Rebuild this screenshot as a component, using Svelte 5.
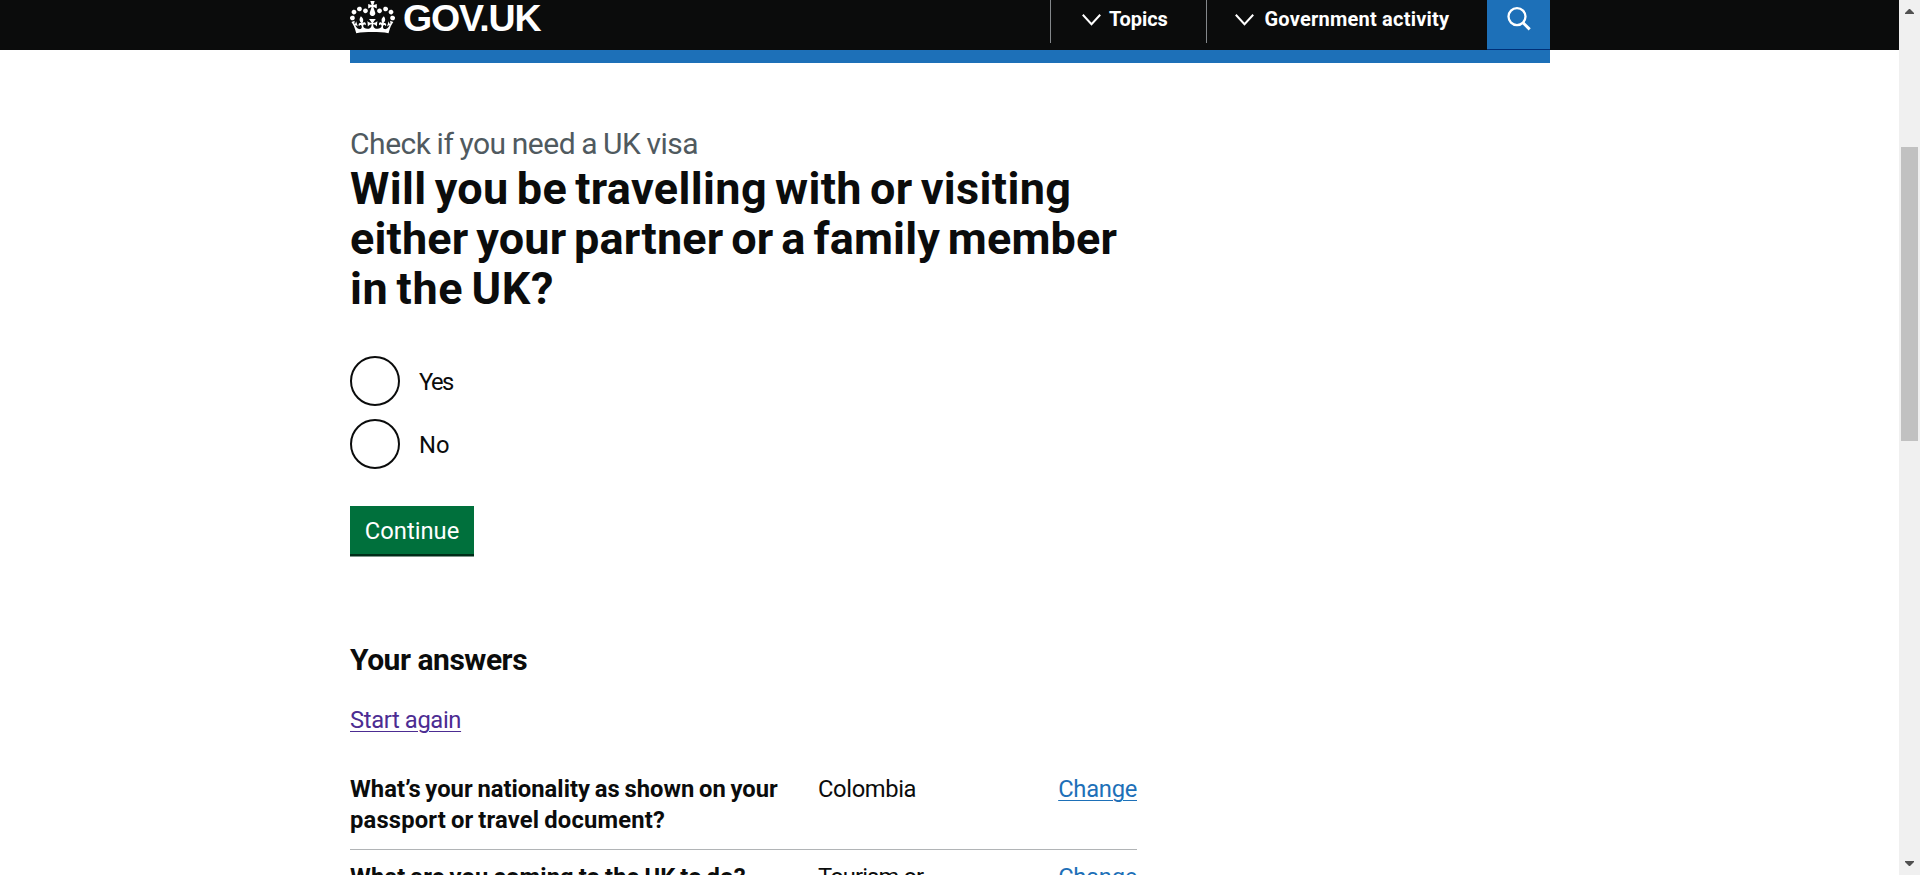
<script>
  let choice = $state('');

  const menus = [
    { label: 'Topics', cls: 'topics' },
    { label: 'Government activity', cls: 'activity' }
  ];
  const answers = [
    {
      question: [
        ['What’s your nationality as shown on your', 0.03],
        ['passport or travel document?', 0.19]
      ],
      value: ['Colombia', -0.38]
    },
    {
      question: [['What are you coming to the UK to do?', 0.15]],
      value: ['Tourism or', -0.88]
    }
  ];
  const title = [
    ['Will you be travelling with or visiting', 0.37],
    ['either your partner or a family member', 0.16],
    ['in the UK?', 0.6]
  ];
</script>

<div class="window">
  <div class="page">
    <header>
      <div class="container bar">
        <a class="logo" href="#home" aria-label="GOV.UK">
          <svg width="45" height="32.5" viewBox="0 0 132 97" preserveAspectRatio="none" aria-hidden="true">
            <path fill="#fff" d="M25 30.2c3.5 1.5 7.7-.2 9.1-3.7 1.5-3.6-.2-7.8-3.9-9.2-3.6-1.4-7.6.3-9.1 3.9-1.4 3.5.3 7.5 3.9 9zM9 39.5c3.6 1.5 7.8-.2 9.2-3.7 1.5-3.6-.2-7.8-3.9-9.1-3.6-1.5-7.6.2-9.1 3.8-1.4 3.5.3 7.5 3.8 9zM4.4 57.2c3.5 1.5 7.7-.2 9.1-3.8 1.5-3.6-.2-7.7-3.9-9.1-3.5-1.5-7.6.3-9.1 3.8-1.4 3.5.3 7.6 3.9 9.1zm38.3-21.4c3.5 1.5 7.7-.2 9.1-3.8 1.5-3.6-.2-7.7-3.9-9.1-3.6-1.5-7.6.3-9.1 3.8-1.3 3.6.4 7.7 3.9 9.1zm64.4-5.6c-3.6 1.5-7.8-.2-9.1-3.7-1.5-3.6.2-7.8 3.8-9.2 3.6-1.4 7.7.3 9.2 3.9 1.3 3.5-.4 7.5-3.9 9zm15.9 9.3c-3.6 1.5-7.7-.2-9.1-3.7-1.5-3.6.2-7.8 3.7-9.1 3.6-1.5 7.7.2 9.2 3.8 1.5 3.5-.3 7.5-3.8 9zm4.7 17.7c-3.6 1.5-7.8-.2-9.2-3.8-1.5-3.6.2-7.7 3.9-9.1 3.6-1.5 7.7.3 9.2 3.8 1.3 3.5-.4 7.6-3.9 9.1zM89.3 35.8c-3.6 1.5-7.8-.2-9.2-3.8-1.4-3.6.2-7.7 3.9-9.1 3.6-1.5 7.7.3 9.2 3.8 1.4 3.6-.3 7.7-3.9 9.1zM69.7 17.7l8.9 4.7V9.3l-8.9 2.8c-.2-.3-.5-.6-.9-.9L72.4 0H59.6l3.5 11.2c-.3.3-.6.5-.9.9l-8.8-2.8v13.1l8.8-4.7c.3.3.6.7.9.9l-5 15.4v.1c-.2.8-.4 1.6-.4 2.4 0 4.1 3.1 7.5 7 8.1h.2c.3 0 .7.1 1 .1.4 0 .7 0 1-.1h.2c4-.6 7.1-4.1 7.1-8.1 0-.8-.1-1.7-.4-2.4V34l-5.1-15.4c.4-.2.7-.6 1-.9zM66 92.8c16.9 0 32.8 1.1 47.1 3.2 4-16.9 8.9-26.7 14-33.5l-9.6-3.4c1 4.9 1.1 7.2 0 10.2-1.5-1.4-3-4.3-4.2-8.7L108.6 76c2.8-2 5-3.2 7.5-3.3-4.4 9.4-10 11.9-13.6 11.2-4.3-.8-6.3-4.6-5.6-7.9 1-4.7 5.7-5.9 8-.5 4.3-8.7-3-11.4-7.6-8.8 7.1-7.2 7.9-13.5 2.1-21.1-8 6.1-8.1 12.3-4.5 20.8-4.7-5.4-12.1-2.5-9.5 6.2 3.4-5.2 7.9-2 7.2 3.1-.6 4.3-6.4 7.8-13.5 7.2-10.3-.9-10.9-8-11.2-13.8 2.5-.5 7.1 1.8 11 7.3L80.2 60c-4.1 4.4-8 5.3-12.3 5.4 1.4-4.4 8-11.6 8-11.6H55.5s6.4 7.2 7.9 11.6c-4.2-.1-8-1-12.3-5.4l1.4 16.4c3.9-5.5 8.5-7.7 10.9-7.3-.3 5.8-.9 12.8-11.1 13.8-7.2.6-12.9-2.9-13.5-7.2-.7-5 3.8-8.3 7.1-3.1 2.7-8.7-4.6-11.6-9.4-6.2 3.7-8.5 3.6-14.7-4.6-20.8-5.8 7.6-5 13.9 2.2 21.1-4.7-2.6-11.9.1-7.7 8.8 2.3-5.5 7.1-4.2 8.1.5.7 3.3-1.3 7.1-5.7 7.9-3.5.7-9-1.8-13.5-11.2 2.5.1 4.7 1.3 7.5 3.3l-4.7-15.4c-1.2 4.4-2.7 7.2-4.3 8.7-1.1-3-.9-5.3 0-10.2l-9.5 3.4c5 6.9 9.9 16.7 14 33.5 14.8-2.1 30.8-3.2 47.7-3.2z" />
          </svg>
          <span>GOV.UK</span>
        </a>
        <nav>
          {#each menus as menu}
            <button class="menu {menu.cls}">
              <svg width="20" height="14" viewBox="0 0 20 14" aria-hidden="true">
                <path d="M.8 1.7 9.5 11.2l8.7-9.5" fill="none" stroke="#fff" stroke-width="2" />
              </svg>
              <span>{menu.label}</span>
            </button>
          {/each}
          <button class="search" aria-label="Search">
            <svg width="26" height="26" viewBox="0 0 26 26" aria-hidden="true">
              <circle cx="11" cy="10.6" r="8.5" fill="none" stroke="#fff" stroke-width="2.3" />
              <path d="m16.5 16.2 7.2 7.2" stroke="#fff" stroke-width="2.9" />
            </svg>
          </button>
        </nav>
      </div>
    </header>
    <div class="container stripe"></div>

    <main class="container">
      <form onsubmit={(e) => e.preventDefault()}>
        <span class="caption">Check if you need a UK visa</span>
        <h1>
          {#each title as [text, spacing]}
            <span style="letter-spacing: {spacing}px">{text}</span>
          {/each}
        </h1>
        <div class="radios">
          {#each ['Yes', 'No'] as option}
            <label class={option.toLowerCase()}>
              <input type="radio" name="response" value={option} bind:group={choice} />
              <span>{option}</span>
            </label>
          {/each}
        </div>
        <button class="continue">Continue</button>
      </form>

      <h2>Your answers</h2>
      <a class="restart" href="#start">Start again</a>

      <dl>
        {#each answers as row}
          <div class="row">
            <dt>
              {#each row.question as [text, spacing]}
                <span style="letter-spacing: {spacing}px">{text}</span>
              {/each}
            </dt>
            <dd style="letter-spacing: {row.value[1]}px">{row.value[0]}</dd>
            <dd><a class="change" href="#change">Change</a></dd>
          </div>
        {/each}
      </dl>
    </main>
  </div>

  <div class="scrollbar">
    <svg class="up" width="9" height="5" viewBox="0 0 9 5" aria-hidden="true"><path d="M0 5V4L4 0h1l4 4v1z" fill="#505050" /></svg>
    <div class="thumb"></div>
    <svg class="down" width="9" height="5" viewBox="0 0 9 5" aria-hidden="true"><path d="M0 0v1l4 4h1l4-4V0z" fill="#505050" /></svg>
  </div>
</div>

<style>
  :global(body) {
    margin: 0;
    overflow: hidden;
  }
  .window {
    display: flex;
    height: 875px;
    overflow: hidden;
    background: #fff;
    color: #0b0c0c;
    font: 400 23.75px/31.25px Roboto, 'Liberation Sans', sans-serif;
  }
  .page {
    flex: 1;
    height: 875px;
    overflow: hidden;
  }
  .container {
    width: 1200px;
    margin-left: 350px;
  }
  button {
    margin: 0;
    padding: 0;
    border: 0;
    border-radius: 0;
    background: none;
    font: inherit;
  }
  svg {
    display: block;
    flex: none;
  }
  header {
    height: 50px;
    background: #0b0c0c;
  }
  .bar {
    display: flex;
    justify-content: space-between;
    height: 50px;
  }
  .logo {
    display: flex;
    gap: 8px;
    padding-top: 1px;
    color: #fff;
    text-decoration: none;
    font: 700 37.5px/35px 'Liberation Sans', Arial, sans-serif;
    letter-spacing: -1.18px;
  }
  nav {
    display: flex;
    align-items: flex-start;
  }
  .menu {
    display: flex;
    box-sizing: border-box;
    height: 43px;
    padding: 3px 0 0 31px;
    border-left: 1px solid #84888b;
    color: #fff;
    font-size: 20px;
    font-weight: 700;
    line-height: 32px;
    gap: 7px;
  }
  .menu svg {
    margin-top: 10px;
  }
  .topics {
    width: 156px;
    letter-spacing: -0.09px;
  }
  .activity {
    width: 281px;
    padding-left: 28px;
    gap: 9.5px;
    letter-spacing: 0.22px;
  }
  .search {
    display: flex;
    align-items: flex-start;
    box-sizing: border-box;
    width: 63px;
    height: 50px;
    padding: 6px 0 0 19px;
    border-bottom: 1px solid #003078;
    background: #1d70b8;
  }
  .stripe {
    height: 12.5px;
    background: #1d70b8;
  }
  .caption {
    display: block;
    margin-top: 62px;
    color: #505a5f;
    font-size: 30px;
    line-height: 37.5px;
    letter-spacing: -0.45px;
    word-spacing: -1px;
  }
  h1 {
    margin: 2px 0 42px;
    font-size: 45px;
    line-height: 50px;
    font-weight: 700;
    word-spacing: -3.5px;
  }
  h1 span,
  dt span {
    display: block;
    white-space: nowrap;
  }
  .radios {
    display: flex;
    flex-direction: column;
    gap: 13px;
  }
  label {
    display: flex;
    align-items: center;
    gap: 19px;
    height: 50px;
  }
  label span {
    padding-top: 3px;
  }
  .yes {
    letter-spacing: -1.6px;
  }
  input {
    appearance: none;
    box-sizing: border-box;
    width: 50px;
    height: 50px;
    margin: 0;
    border: 2px solid #0b0c0c;
    border-radius: 50%;
  }
  input:checked {
    background: radial-gradient(#0b0c0c 12px, transparent 13px);
  }
  .continue {
    display: block;
    width: 124px;
    height: 48px;
    margin-top: 37px;
    background: #00703c;
    box-shadow: 0 2.5px 0 #002d18;
    color: #fff;
    line-height: 50px;
  }
  h2 {
    margin: 87px 0 0;
    font-size: 30px;
    line-height: 37.5px;
    font-weight: 700;
    letter-spacing: -0.47px;
  }
  a {
    text-decoration-thickness: 1px;
    text-underline-offset: 3px;
  }
  .restart {
    display: block;
    width: max-content;
    margin-top: 26px;
    color: #4c2c92;
    letter-spacing: -0.37px;
  }
  dl {
    width: 787px;
    margin: 37.75px 0 0;
  }
  .row {
    display: grid;
    grid-template-columns: 468px minmax(0, 1fr) auto;
    padding-bottom: 12.5px;
    margin-bottom: 12.25px;
    border-bottom: 1px solid #b1b4b6;
  }
  dt {
    font-weight: 700;
    word-spacing: -1.2px;
  }
  dd {
    margin: 0;
  }
  .change {
    color: #1d70b8;
    letter-spacing: -0.28px;
  }
  .scrollbar {
    display: flex;
    flex-direction: column;
    align-items: center;
    box-sizing: border-box;
    width: 21px;
    height: 875px;
    padding: 9px 0;
    background: #f0f0f0;
  }
  .thumb {
    width: 17px;
    height: 294px;
    margin-top: 133px;
    background: #c1c1c1;
  }
  .down {
    margin-top: auto;
  }
</style>
